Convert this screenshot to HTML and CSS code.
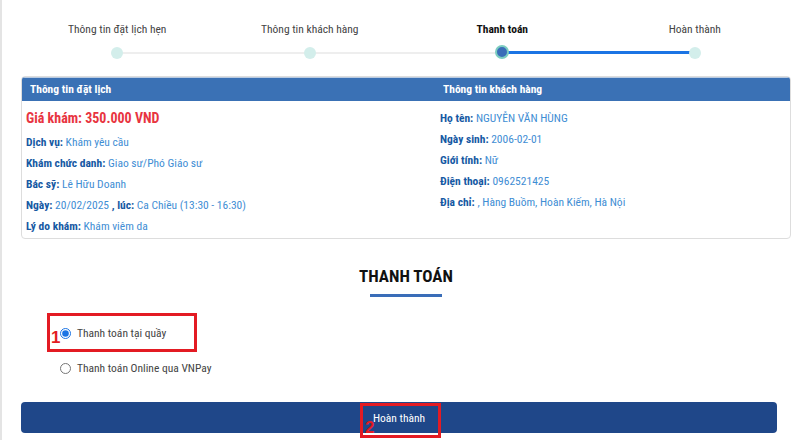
FILE: index.html
```html
<!DOCTYPE html>
<html>
<head>
<meta charset="utf-8">
<link rel="stylesheet" href="styles.css">
<title>Thanh toán</title>
</head>
<body>
  <div class="trang">
    <div class="buoc-list">
      <div class="buoc">
        <div class="buoc-ten">Thông tin đặt lịch hẹn</div>
        <div class="buoc-track"><span class="cham"></span></div>
      </div>
      <div class="buoc">
        <div class="buoc-ten">Thông tin khách hàng</div>
        <div class="buoc-track"><span class="cham"></span></div>
      </div>
      <div class="buoc buoc-hien-tai">
        <div class="buoc-ten">Thanh toán</div>
        <div class="buoc-track"><span class="cham"></span></div>
      </div>
      <div class="buoc buoc-xanh">
        <div class="buoc-ten">Hoàn thành</div>
        <div class="buoc-track"><span class="cham"></span></div>
      </div>
    </div>

    <div class="the-thong-tin">
      <div class="the-cot">
        <div class="the-tieu-de">Thông tin đặt lịch</div>
        <div class="the-noi-dung">
          <div class="gia-kham">Giá khám: 350.000 VND</div>
          <div class="dong"><b>Dịch vụ:</b> Khám yêu cầu</div>
          <div class="dong"><b>Khám chức danh:</b> Giao sư/Phó Giáo sư</div>
          <div class="dong"><b>Bác sỹ:</b> Lê Hữu Doanh</div>
          <div class="dong"><b>Ngày:</b> 20/02/2025 <b>, lúc:</b> Ca Chiều (13:30 - 16:30)</div>
          <div class="dong"><b>Lý do khám:</b> Khám viêm da</div>
        </div>
      </div>
      <div class="the-cot cot-phai">
        <div class="the-tieu-de">Thông tin khách hàng</div>
        <div class="the-noi-dung">
          <div class="dong"><b>Họ tên:</b> NGUYỄN VĂN HÙNG</div>
          <div class="dong"><b>Ngày sinh:</b> 2006-02-01</div>
          <div class="dong"><b>Giới tính:</b> Nữ</div>
          <div class="dong"><b>Điện thoại:</b> 0962521425</div>
          <div class="dong"><b>Địa chỉ:</b> , Hàng Buồm, Hoàn Kiếm, Hà Nội</div>
        </div>
      </div>
    </div>

    <h2 class="tieu-de-thanh-toan">THANH TOÁN</h2>

    <div class="lua-chon">
      <label class="lua-chon-dong">
        <span class="khung-do khung-1"><span class="so-do">1</span></span>
        <input type="radio" name="pttt" checked> Thanh toán tại quầy
      </label>
      <label class="lua-chon-dong">
        <input type="radio" name="pttt"> Thanh toán Online qua VNPay
      </label>
    </div>

    <button class="nut-hoan-thanh">
      <span class="nut-chu">Hoàn thành<span class="khung-do khung-2"><span class="so-do">2</span></span></span>
    </button>
  </div>
</body>
</html>
```

FILE: styles.css
```css
body {
  margin: 0;
  background-color: #ffffff;
  font-family: "Roboto Condensed", Roboto, sans-serif;
  font-size: 11px;
  color: #444444;
}

.trang {
  min-height: 440px;
  box-sizing: border-box;
  border-left: 2px solid #e4e4e4;
  padding: 21px 17px 0 19px;
}

.buoc-list {
  display: grid;
  grid-template-columns: repeat(4, 1fr);
}

.buoc {
  text-align: center;
}

.buoc-ten {
  font-size: 11.5px;
  line-height: 16px;
  color: #444444;
}

.buoc-hien-tai .buoc-ten {
  font-weight: bold;
  color: #111111;
}

.buoc-track {
  position: relative;
  height: 14px;
  margin-top: 9px;
}

.buoc + .buoc .buoc-track::before {
  content: "";
  position: absolute;
  left: -50%;
  width: 100%;
  top: 6px;
  height: 2px;
  background-color: #eeeeee;
}

.buoc-xanh .buoc-track::before {
  background-color: #1b74e4 !important;
  height: 3px !important;
  top: 5px !important;
}

.cham {
  position: relative;
  z-index: 1;
  display: inline-block;
  width: 12px;
  height: 12px;
  margin-top: 1px;
  border-radius: 50%;
  background-color: #d3eeeb;
}

.buoc-hien-tai .cham {
  width: 10px;
  height: 10px;
  margin-top: -1px;
  background-color: #3a6db8;
  border: 2px solid #7ccdc1;
}

.the-thong-tin {
  display: grid;
  grid-template-columns: 1fr 1fr;
  margin-top: 16px;
  border: 1px solid #dddddd;
  border-radius: 4px;
  overflow: hidden;
}

.the-tieu-de {
  background-color: #3a71b5;
  color: #ffffff;
  font-weight: bold;
  font-size: 11.5px;
  height: 23px;
  line-height: 23px;
  padding-left: 8px;
  border-top: 1px solid #b9cbe2;
}

.cot-phai .the-tieu-de {
  padding-left: 37px;
}

.the-noi-dung {
  padding: 7px 4px 1px 4px;
}

.cot-phai .the-noi-dung {
  padding: 7px 4px 1px 34px;
}

.gia-kham {
  color: #e8343f;
  font-weight: bold;
  font-size: 14px;
  line-height: 20px;
  margin-bottom: 4px;
}

.dong {
  font-size: 11.5px;
  line-height: 21px;
  color: #3f8ed4;
}

.dong b {
  color: #1659a3;
}

.tieu-de-thanh-toan {
  margin: 27px 0 0 0;
  text-align: center;
  font-size: 17px;
  line-height: 20px;
  color: #111111;
}

.tieu-de-thanh-toan::after {
  content: "";
  display: block;
  width: 72px;
  height: 3px;
  margin: 8px auto 0 auto;
  background-color: #3a6db8;
}

.lua-chon {
  padding: 26px 0 0 39px;
}

.lua-chon-dong {
  position: relative;
  display: flex;
  align-items: center;
  gap: 6px;
  height: 20px;
  font-size: 11.5px;
  color: #444444;
}

.lua-chon-dong + .lua-chon-dong {
  margin-top: 15px;
}

.lua-chon-dong input {
  width: 11px;
  height: 11px;
  margin: 0;
  accent-color: #1b74e4;
}

.khung-do {
  position: absolute;
  border: 3px solid #e31b23;
}

.khung-1 {
  left: -13px;
  top: -10px;
  width: 144px;
  height: 33px;
}

.so-do {
  position: absolute;
  color: #e31b23;
  font-family: "Liberation Sans", sans-serif;
  font-weight: bold;
  font-size: 17px;
}

.khung-1 .so-do {
  left: 1px;
  top: 12px;
}

.nut-hoan-thanh {
  display: block;
  width: 756px;
  height: 31px;
  margin-top: 24px;
  border: none;
  border-radius: 4px;
  background-color: #1f4789;
  color: #ffffff;
  font-family: "Roboto Condensed", Roboto, sans-serif;
  font-size: 11.5px;
}

.nut-chu {
  position: relative;
}

.khung-2 {
  left: -13px;
  top: -8px;
  width: 75px;
  height: 29px;
}

.khung-2 .so-do {
  left: 2px;
  top: 12px;
}
```
